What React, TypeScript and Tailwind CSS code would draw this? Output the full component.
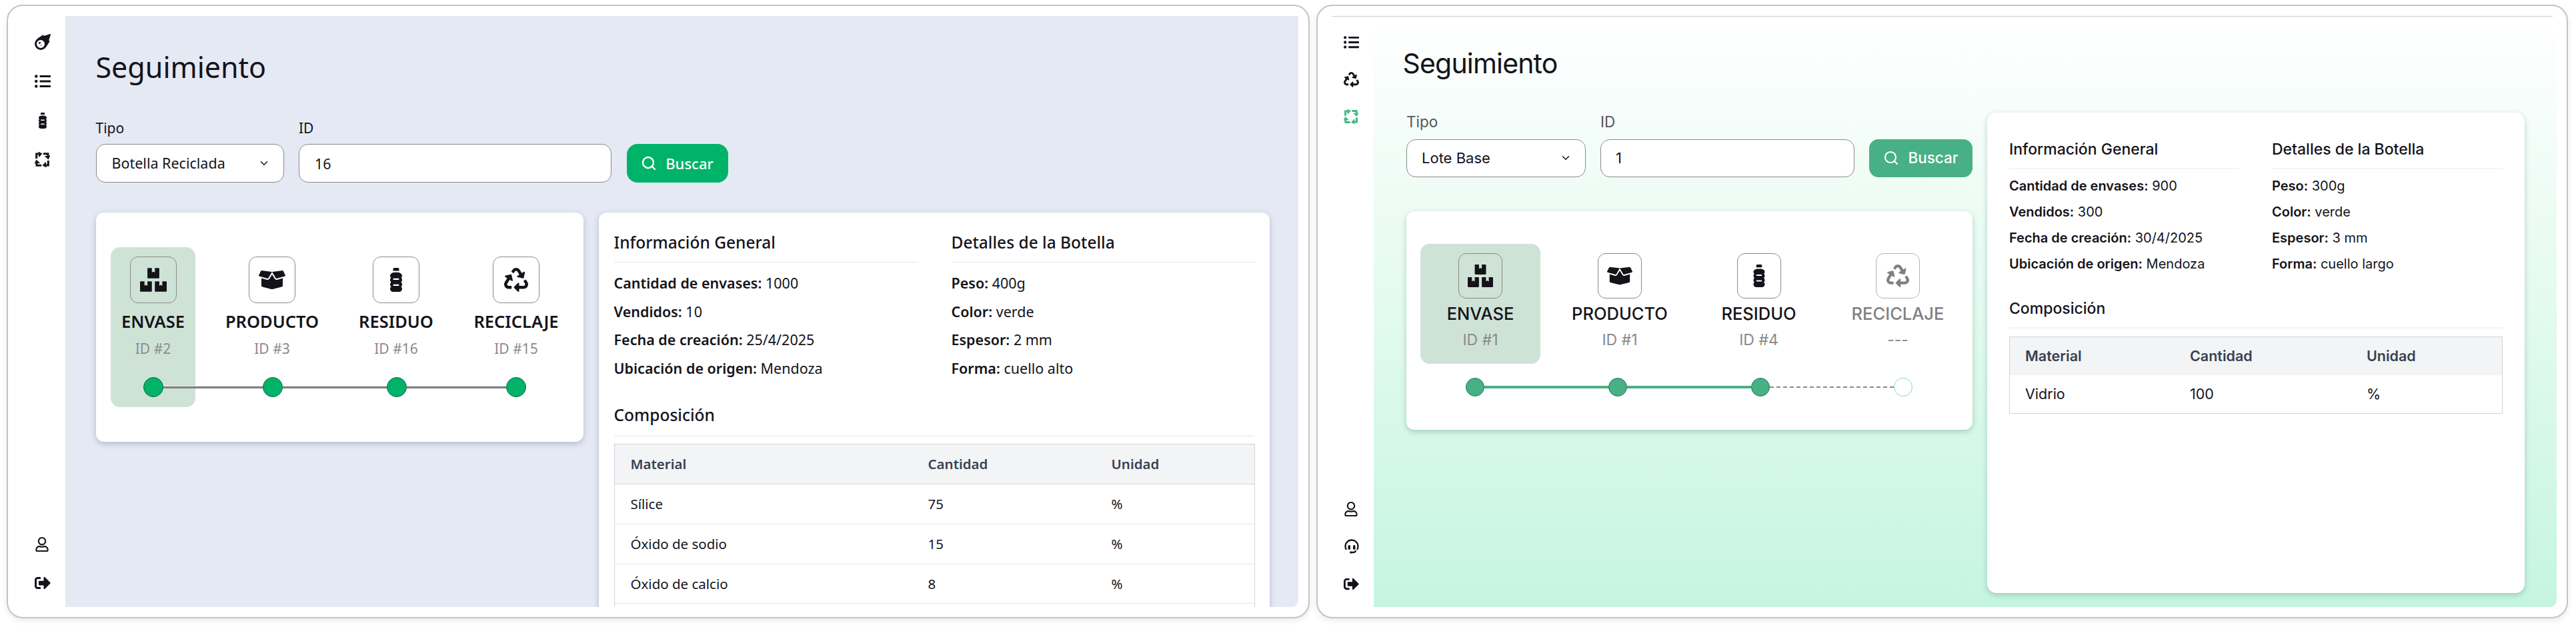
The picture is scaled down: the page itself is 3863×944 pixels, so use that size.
import React from "react";
import { FaBoxes, FaBoxOpen, FaListUl, FaMeteor, FaRecycle, FaRegUser, FaSignOutAlt } from "react-icons/fa";
import { FaBottleWater } from "react-icons/fa6";
import { LuChevronDown, LuSearch } from "react-icons/lu";

const SyncIcon = ({ size = 24 }: { size?: number }) => (
  <svg width={size} height={size} viewBox="0 0 24 24" fill="currentColor">
    {[0, 90, 180, 270].map((r) => (
      <g key={r} transform={`rotate(${r} 12 12)`}>
        <path d="M2.8 10.5V3.2H6" fill="none" stroke="currentColor" strokeWidth="3.2" />
        <path d="M5.5 -0.5L12 2.5L6.5 8.5Z" />
      </g>
    ))}
  </svg>
);

const HeadsetIcon = ({ size = 24 }: { size?: number }) => (
  <svg width={size} height={size} viewBox="0 0 24 24" fill="none" stroke="currentColor" strokeWidth="2.3">
    <path d="M4 17C2.8 15.6 2.5 13.8 2.5 12A9.5 9.5 0 0 1 21.5 12C21.5 13.8 21.2 15.6 20 17" />
    <rect x="6.5" y="10" width="3.5" height="7" rx="1.7" fill="currentColor" stroke="none" />
    <rect x="14" y="10" width="3.5" height="7" rx="1.7" fill="currentColor" stroke="none" />
    <path d="M18 18C18 20 16.5 21 14 21H12" />
    <rect x="9" y="19.5" width="4" height="3" rx="1.5" fill="currentColor" stroke="none" />
  </svg>
);

const rowsLeft = [
  ["Sílice", "75", "%"],
  ["Óxido de sodio", "15", "%"],
  ["Óxido de calcio", "8", "%"],
  ["", "", ""],
];

const InfoLeft = ({ k, v }: { k: string; v: string }) => (
  <p className="h-[42.7px] leading-[42.7px]">
    <span className="font-semibold">{k}:</span> {v}
  </p>
);

const InfoRight = ({ k, v }: { k: string; v: string }) => (
  <p className="h-[39px] leading-[39px]">
    <span className="font-semibold">{k}:</span> {v}
  </p>
);

const StepLeft = ({ icon, label, id, active }: { icon: React.ReactNode; label: string; id: string; active?: boolean }) => (
  <div className={`flex h-[240px] flex-col items-center rounded-[14px] pt-[14px] ${active ? "bg-[#cee3d6]" : ""}`}>
    <div className="flex h-[70px] w-[70px] items-center justify-center rounded-[12px] border border-[#8a8a8a]">{icon}</div>
    <span className="mt-[10px] text-[25.5px] leading-[34px] font-semibold text-[#14131a]">{label}</span>
    <span className="mt-[7px] text-[21px] leading-[34px] text-[#8a8a8a]">{id}</span>
  </div>
);

const StepRight = ({ icon, label, id, active, muted }: { icon: React.ReactNode; label: string; id: string; active?: boolean; muted?: boolean }) => (
  <div className={`flex h-[180px] flex-col items-center rounded-[14px] pt-[14px] ${active ? "bg-[#cee3d6]" : ""}`}>
    <div className={`flex h-[68px] w-[66px] items-center justify-center rounded-[12px] border ${muted ? "border-[#b5b5b5]" : "border-[#8a8a8a]"}`}>{icon}</div>
    <span className={`mt-[6px] text-[25.5px] leading-[34px] font-medium ${muted ? "text-[#808080]" : "text-[#14131a]"}`}>{label}</span>
    <span className="mt-[5px] text-[23px] leading-[34px] text-[#8a8a8a]">{id}</span>
  </div>
);

const LeftPanel = () => (
  <section className="flex h-[921px] w-[1954px] rounded-[24px] border-2 border-[#c4c4c4] bg-white py-[15px] pr-[15px] font-['Noto_Sans',sans-serif] text-[#14131a] shadow-[0_4px_10px_rgba(0,0,0,0.08)]">
    <aside className="flex w-[86px] shrink-0 flex-col items-start justify-between pt-[27px] pb-[24px] pl-[40px]">
      <div className="flex flex-col items-start gap-[35px]">
        <FaMeteor size={24} />
        <FaListUl size={24} />
        <FaBottleWater size={24} />
        <SyncIcon size={23} />
      </div>
      <div className="flex flex-col items-start gap-[35px]">
        <FaRegUser size={22} />
        <FaSignOutAlt size={24} />
      </div>
    </aside>
    <main className="min-w-0 flex-1 overflow-hidden rounded-br-[10px] bg-[#e5e9f4] pt-[48px] pl-[45.5px]">
      <h1 className="text-[43px] leading-[58px]">Seguimiento</h1>
      <div className="mt-[48px] flex items-end gap-[22.5px]">
        <label className="block w-[282px]">
          <span className="block text-[21px] leading-[28px]">Tipo</span>
          <span className="mt-[10px] flex h-[58px] items-center justify-between rounded-[14px] border border-[#8a8a8a] bg-white pr-[20px] pl-[23px] text-[21.5px]">
            Botella Reciclada
            <LuChevronDown size={18} />
          </span>
        </label>
        <label className="block w-[469px]">
          <span className="block text-[21px] leading-[28px]">ID</span>
          <input readOnly value="16" className="mt-[10px] block h-[58px] w-full rounded-[14px] border border-[#8a8a8a] bg-white px-[23px] text-[21.5px]" />
        </label>
        <button className="flex h-[58px] w-[152px] items-center justify-center gap-[13px] rounded-[16px] bg-[#00b368] text-[22px] font-medium text-white">
          <LuSearch size={24} strokeWidth={2.4} />
          Buscar
        </button>
      </div>
      <div className="mt-[45px] flex items-start gap-[23px]">
        <div className="h-[344px] w-[731px] shrink-0 rounded-[12px] bg-white pt-[52px] pl-[22.5px] shadow-[0_3px_8px_rgba(70,80,110,0.3)]">
          <div className="grid grid-cols-[127px_230px_142px_218px] justify-start">
            <StepLeft active label="ENVASE" id="ID #2" icon={<FaBoxes size={40} />} />
            <StepLeft label="PRODUCTO" id="ID #3" icon={<FaBoxOpen size={40} />} />
            <StepLeft label="RESIDUO" id="ID #16" icon={<FaBottleWater size={36} />} />
            <StepLeft label="RECICLAJE" id="ID #15" icon={<FaRecycle size={36} />} />
          </div>
          <div className="relative -mt-[45px] ml-[49px] flex items-center">
            <span className="z-10 h-[30px] w-[30px] shrink-0 rounded-full border border-[#006b45] bg-[#00b368]" />
            <span className="h-[3px] w-[149px] bg-[#7f7f7f] shadow-[0_-1px_0_#e5e7eb]" />
            <span className="z-10 h-[30px] w-[30px] shrink-0 rounded-full border border-[#006b45] bg-[#00b368]" />
            <span className="h-[3px] w-[156px] bg-[#7f7f7f] shadow-[0_-1px_0_#e5e7eb]" />
            <span className="z-10 h-[30px] w-[30px] shrink-0 rounded-full border border-[#006b45] bg-[#00b368]" />
            <span className="h-[3px] w-[149px] bg-[#7f7f7f] shadow-[0_-1px_0_#e5e7eb]" />
            <span className="z-10 h-[30px] w-[30px] shrink-0 rounded-full border border-[#006b45] bg-[#00b368]" />
          </div>
        </div>
        <div className="h-[700px] w-[1006px] shrink-0 rounded-t-[12px] bg-white px-[23px] pt-[28px] text-[21.5px] shadow-[0_3px_8px_rgba(70,80,110,0.3)]">
          <div className="grid grid-cols-[455px_455px] gap-x-[51px]">
            <div>
              <h3 className="h-[47px] border-b border-[#e5e7eb] text-[24.5px] leading-[34px] font-medium">Información General</h3>
              <div className="mt-[10px]">
                <InfoLeft k="Cantidad de envases" v="1000" />
                <InfoLeft k="Vendidos" v="10" />
                <InfoLeft k="Fecha de creación" v="25/4/2025" />
                <InfoLeft k="Ubicación de origen" v="Mendoza" />
              </div>
            </div>
            <div>
              <h3 className="h-[47px] border-b border-[#e5e7eb] text-[24.5px] leading-[34px] font-medium">Detalles de la Botella</h3>
              <div className="mt-[10px]">
                <InfoLeft k="Peso" v="400g" />
                <InfoLeft k="Color" v="verde" />
                <InfoLeft k="Espesor" v="2 mm" />
                <InfoLeft k="Forma" v="cuello alto" />
              </div>
            </div>
          </div>
          <h3 className="mt-[31px] h-[49px] border-b border-[#e5e7eb] text-[24.5px] leading-[34px] font-medium">Composición</h3>
          <div className="mt-[11.5px] w-[961px] border border-[#d1d5db] text-[20.5px]">
            <div className="grid h-[60px] grid-cols-[446px_275px_1fr] items-center border-b border-[#d1d5db] bg-[#f3f4f6] pl-[24px] font-semibold text-[#374151]">
              <span>Material</span>
              <span>Cantidad</span>
              <span>Unidad</span>
            </div>
            {rowsLeft.map((r, i) => (
              <div key={i} className="grid h-[59.7px] grid-cols-[446px_275px_1fr] items-center border-b border-[#e5e7eb] pl-[24px]">
                <span>{r[0]}</span>
                <span>{r[1]}</span>
                <span>{r[2]}</span>
              </div>
            ))}
          </div>
        </div>
      </div>
    </main>
  </section>
);

const RightPanel = () => (
  <section className="flex h-[921px] w-[1877px] flex-col rounded-[24px] border-2 border-[#c4c4c4] bg-white py-[15px] pr-[15px] font-['Inter',sans-serif] text-[#14131a] shadow-[0_4px_10px_rgba(0,0,0,0.08)]">
    <div className="ml-[22px] mr-[6px] h-px shrink-0 bg-[#cccccc]" />
    <div className="flex min-h-0 flex-1">
      <aside className="flex w-[84px] shrink-0 flex-col items-start justify-between pt-[27px] pb-[23px] pl-[39px]">
        <div className="flex flex-col items-start gap-[33px]">
          <FaListUl size={23} />
          <FaRecycle size={23} />
          <span className="text-[#3fb97f]"><SyncIcon size={22} /></span>
        </div>
        <div className="flex flex-col items-start gap-[33px]">
          <FaRegUser size={22} />
          <HeadsetIcon size={24} />
          <FaSignOutAlt size={23} />
        </div>
      </aside>
      <main className="min-w-0 flex-1 overflow-hidden rounded-br-[10px] bg-gradient-to-b from-white to-[#c5f5e0] pt-[46px] pl-[43.5px]">
        <h1 className="text-[41px] leading-[48px] font-normal tracking-[-0.02em]">Seguimiento</h1>
        <div className="mt-[49.5px] flex items-start gap-[22px] pl-[5.5px]">
          <div className="w-[849px] shrink-0">
            <div className="flex items-end gap-[22px]">
              <label className="block w-[269px]">
                <span className="block text-[22.5px] leading-[28px] text-[#555555]">Tipo</span>
                <span className="mt-[12px] flex h-[57px] items-center justify-between rounded-[14px] border border-[#8a8a8a] bg-white pr-[20px] pl-[22px] text-[22px]">
                  Lote Base
                  <LuChevronDown size={18} />
                </span>
              </label>
              <label className="block w-[381px]">
                <span className="block text-[22.5px] leading-[28px] text-[#555555]">ID</span>
                <input readOnly value="1" className="mt-[12px] block h-[57px] w-full rounded-[14px] border border-[#8a8a8a] bg-white px-[22px] text-[22px]" />
              </label>
              <button className="flex h-[57px] w-[155px] items-center justify-center gap-[13px] rounded-[14px] bg-[#48b085] text-[22.5px] font-medium text-white">
                <LuSearch size={24} strokeWidth={2.2} />
                Buscar
              </button>
            </div>
            <div className="mt-[51px] h-[328px] rounded-[12px] bg-white pt-[49px] pl-[21px] shadow-[0_3px_8px_rgba(50,110,90,0.3)]">
              <div className="grid grid-cols-[180px_238px_179px_238px] justify-start">
                <StepRight active label="ENVASE" id="ID #1" icon={<FaBoxes size={38} />} />
                <StepRight label="PRODUCTO" id="ID #1" icon={<FaBoxOpen size={38} />} />
                <StepRight label="RESIDUO" id="ID #4" icon={<FaBottleWater size={34} />} />
                <StepRight muted label="RECICLAJE" id="---" icon={<span className="text-[#808080]"><FaRecycle size={34} /></span>} />
              </div>
              <div className="mt-[21px] ml-[68px] flex items-center">
                <span className="z-10 h-[28px] w-[28px] shrink-0 rounded-full border border-[#1f7a57] bg-[#48b085]" />
                <span className="h-[4px] w-[186px] bg-[#48b085]" />
                <span className="z-10 h-[28px] w-[28px] shrink-0 rounded-full border border-[#1f7a57] bg-[#48b085]" />
                <span className="h-[4px] w-[186px] bg-[#48b085]" />
                <span className="z-10 h-[28px] w-[28px] shrink-0 rounded-full border border-[#1f7a57] bg-[#48b085]" />
                <span className="w-[186px] border-t-2 border-dashed border-[#8a8a8a]" />
                <span className="z-10 h-[28px] w-[28px] shrink-0 rounded-full border border-[#8fd6b8] bg-white" />
              </div>
            </div>
          </div>
          <div className="h-[721px] w-[806px] shrink-0 rounded-[14px] bg-white px-[33px] pt-[38px] text-[20px] shadow-[0_3px_8px_rgba(50,110,90,0.3)]">
            <div className="grid grid-cols-[345px_346px] gap-x-[49px]">
              <div>
                <h3 className="h-[47px] border-b-2 border-[#f3f4f6] text-[23px] leading-[34px] font-medium">Información General</h3>
                <div className="mt-[6px]">
                  <InfoRight k="Cantidad de envases" v="900" />
                  <InfoRight k="Vendidos" v="300" />
                  <InfoRight k="Fecha de creación" v="30/4/2025" />
                  <InfoRight k="Ubicación de origen" v="Mendoza" />
                </div>
              </div>
              <div>
                <h3 className="h-[47px] border-b-2 border-[#f3f4f6] text-[23px] leading-[34px] font-medium">Detalles de la Botella</h3>
                <div className="mt-[6px]">
                  <InfoRight k="Peso" v="300g" />
                  <InfoRight k="Color" v="verde" />
                  <InfoRight k="Espesor" v="3 mm" />
                  <InfoRight k="Forma" v="cuello largo" />
                </div>
              </div>
            </div>
            <h3 className="mt-[30px] h-[47px] border-b-2 border-[#f3f4f6] text-[23px] leading-[34px] font-medium">Composición</h3>
            <div className="mt-[12px] w-[740px] border border-[#d1d5db] text-[21.5px]">
              <div className="grid h-[57px] grid-cols-[247px_265px_1fr] items-center bg-[#f3f4f6] pl-[23px] font-semibold text-[#374151]">
                <span>Material</span>
                <span>Cantidad</span>
                <span>Unidad</span>
              </div>
              <div className="grid h-[57px] grid-cols-[247px_265px_1fr] items-center pl-[23px]">
                <span>Vidrio</span>
                <span>100</span>
                <span>%</span>
              </div>
            </div>
          </div>
        </div>
      </main>
    </div>
  </section>
);

export default function App() {
  return (
    <div className="flex h-[944px] w-[3863px] gap-[10px] overflow-hidden bg-white pt-[7px] pl-[10px]">
      <LeftPanel />
      <RightPanel />
    </div>
  );
}
